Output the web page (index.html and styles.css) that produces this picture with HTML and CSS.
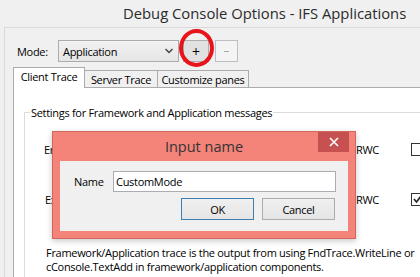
FILE: index.html
```html
<!DOCTYPE html>
<html>
<head>
<meta charset="utf-8">
<link rel="stylesheet" href="styles.css">
</head>
<body>
<div class="titlebar">Debug Console Options - IFS Applications</div>
<div class="client">
  <div class="moderow">
    <span class="mode-label">Mode:</span>
    <div class="combo">
      <span>Application</span>
      <svg class="chev" width="8" height="6" viewBox="0 0 8 6"><polyline points="0.5,1 4,4.5 7.5,1" fill="none" stroke="#444" stroke-width="1.5"/></svg>
    </div>
    <button class="btn plus">+</button>
    <button class="btn minus" disabled><span class="dash"></span></button>
  </div>
  <div class="tabs">
    <div class="tab active">Client Trace</div>
    <div class="tab t2">Server Trace</div>
    <div class="tab t3">Customize panes</div>
  </div>
  <div class="panel">
    <fieldset class="group">
      <legend>Settings for Framework and Application messages</legend>
      <div class="row r1"><span class="lbl">Error messages</span><span class="rwc">RWC</span><span class="cb"></span></div>
      <div class="row r2"><span class="lbl">Exceptions</span><span class="rwc">RWC</span><span class="cb checked"><svg width="11" height="11" viewBox="0 0 11 11"><polyline points="2,5 4.5,8 9,2" fill="none" stroke="#222" stroke-width="1.6"/></svg></span></div>
      <p class="note">Framework/Application trace is the output from using FndTrace.WriteLine or<br>cConsole.TextAdd in framework/application components.</p>
    </fieldset>
  </div>
</div>

<div class="highlight"></div>

<div class="dialog">
  <div class="dlg-title">
    <span></span>
    <span class="dlg-text">Input name</span>
    <span class="close"><svg width="10" height="10" viewBox="0 0 10 10"><path d="M1 1L9 9M9 1L1 9" stroke="#fff" stroke-width="1.6"/></svg></span>
  </div>
  <div class="dlg-body">
    <div class="name-row">
      <span class="name-label">Name</span>
      <div class="input">CustomMode</div>
    </div>
    <div class="btn-row">
      <div class="dbtn ok">OK</div>
      <div class="dbtn">Cancel</div>
    </div>
  </div>
</div>
</body>
</html>
```

FILE: styles.css
```css
* { box-sizing: border-box; }
html, body { margin: 0; padding: 0; }
body {
  width: 420px;
  height: 277px;
  overflow: hidden;
  position: relative;
  background: #f0f0f0;
  font-family: "Open Sans", "Noto Sans", sans-serif;
  font-size: 11px;
  letter-spacing: -0.3px;
  color: #000;
}
.titlebar {
  height: 27px;
  padding-left: 123px;
  font-size: 14.8px;
  letter-spacing: 0;
  line-height: 27px;
  color: #2b2b2b;
  white-space: nowrap;
  overflow: hidden;
}
.client {
  margin-left: 4px;
  height: 250px;
  width: 416px;
  border-left: 1px solid #dadada;
  border-top: 1px solid #dadada;
  overflow: hidden;
}
.moderow {
  display: flex;
  align-items: center;
  height: 22px;
  margin-top: 12px;
  padding-left: 12px;
}
.mode-label { width: 41px; }
.combo {
  width: 121px;
  height: 22px;
  border: 1px solid #acacac;
  background: linear-gradient(#f2f2f2, #e5e5e5);
  display: flex;
  align-items: center;
  justify-content: space-between;
  padding: 0 5px 0 4px;
}
.chev { display: block; }
.btn {
  height: 22px;
  padding: 0;
  font-family: inherit;
  border: 1px solid #adadad;
  background: #e1e1e1;
  display: flex;
  align-items: center;
  justify-content: center;
}
.plus { width: 26px; margin-left: 4px; font-size: 14px; color: #000; }
.minus { width: 23px; margin-left: 6px; border-color: #bfbfbf; background: #f4f4f4; }
.dash { display: block; width: 5px; height: 1px; background: #a8a8a8; }
.tabs {
  display: flex;
  align-items: flex-end;
  height: 20px;
  margin-top: 5px;
  margin-left: 8px;
}
.tab {
  height: 17px;
  border: 1px solid #acacac;
  border-bottom: none;
  background: #f0f0f0;
  display: flex;
  align-items: center;
  justify-content: center;
  white-space: nowrap;
}
.tab.active {
  height: 21px;
  width: 72px;
  margin-bottom: -1px;
  background: #fff;
  position: relative;
  z-index: 1;
  padding-bottom: 3px;
}
.t2 { width: 73px; border-left: none; }
.t3 { width: 91px; border-left: none; }
.panel {
  margin-left: 8px;
  width: 420px;
  height: 200px;
  background: #fff;
  border-left: 1px solid #acacac;
  border-top: 1px solid #acacac;
  padding-top: 17px;
}
.group {
  margin: 0 0 0 10px;
  padding: 0 0 0 5px;
  border: 1px solid #dcdcdc;
  height: 300px;
  min-width: 0;
}
.group legend {
  padding: 0 1px;
  line-height: 15px;
}
.row {
  display: flex;
  align-items: center;
  height: 20px;
  padding-left: 14px;
}
.r1 { margin-top: 19px; }
.r2 { margin-top: 30px; padding-left: 15px; }
.lbl { width: 312px; white-space: nowrap; }
.r2 .lbl { width: 311px; }
.rwc { width: 55px; flex: none; }
.cb {
  flex: none;
  width: 13px;
  height: 13px;
  border: 1px solid #333;
  background: #fff;
  display: flex;
  align-items: center;
  justify-content: center;
}
.note {
  margin: 37px 0 0 16px;
  line-height: 13.5px;
  white-space: nowrap;
}
.highlight {
  position: absolute;
  left: 179px;
  top: 29px;
  width: 35px;
  height: 38px;
  border: 4px solid #e8141c;
  border-radius: 50%;
}
.dialog {
  position: absolute;
  left: 52px;
  top: 131px;
  width: 304px;
  height: 108px;
  background: #f4837a;
  border: 1px solid #d0675c;
  box-shadow: 0 2px 6px rgba(0,0,0,0.22);
  display: flex;
  flex-direction: column;
}
.dlg-title {
  height: 29px;
  display: grid;
  grid-template-columns: 1fr auto 1fr;
  align-items: start;
}
.dlg-text {
  font-size: 14.5px;
  letter-spacing: 0;
  line-height: 29px;
  color: #333;
}
.close {
  justify-self: end;
  margin-right: 6px;
  width: 31px;
  height: 20px;
  background: #c75050;
  display: flex;
  align-items: center;
  justify-content: center;
}
.dlg-body {
  flex: 1;
  margin: 0 7px 7px 7px;
  background: #f0f0f0;
  padding: 10px 12px 0 14px;
}
.name-row {
  display: flex;
  align-items: center;
  height: 21px;
}
.name-label { width: 39px; }
.input {
  width: 223px;
  height: 21px;
  border: 1px solid #abadb3;
  background: #fff;
  padding-left: 2px;
  line-height: 19px;
}
.btn-row {
  display: flex;
  justify-content: flex-end;
  gap: 8px;
  margin-top: 6px;
  padding-right: 1px;
}
.dbtn {
  width: 73px;
  height: 22px;
  border: 1px solid #acacac;
  background: linear-gradient(#f0f0f0, #e5e5e5);
  display: flex;
  align-items: center;
  justify-content: center;
}
.dbtn.ok { border-color: #3c7fb1; }
```
